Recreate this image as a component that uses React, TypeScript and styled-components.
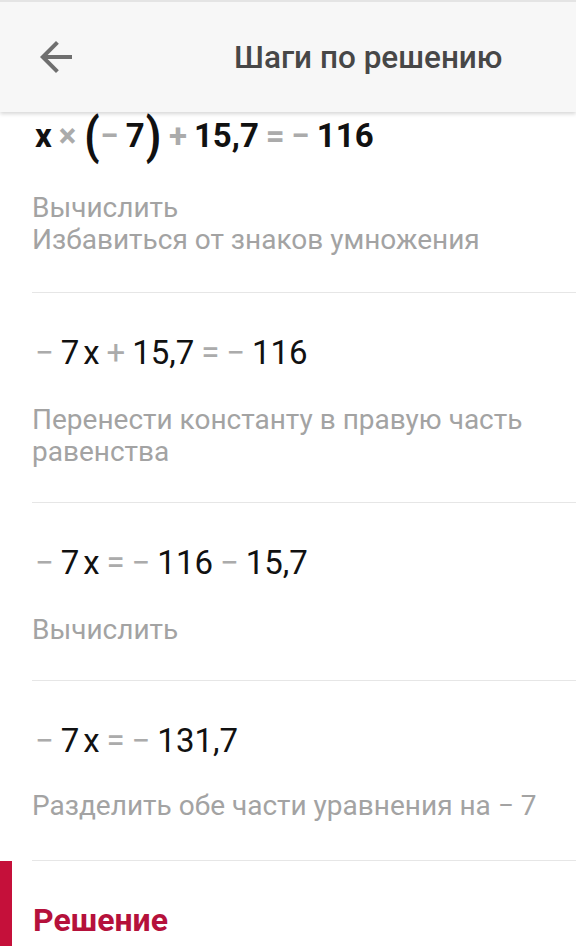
import styled, { createGlobalStyle } from 'styled-components';

const GlobalStyle = createGlobalStyle`
  html, body {
    margin: 0;
    padding: 0;
    background: #ffffff;
  }
  body {
    font-family: Roboto, "Noto Sans", "Liberation Sans", sans-serif;
    -webkit-font-smoothing: antialiased;
  }
`;

const Screen = styled.div`
  width: 576px;
  height: 946px;
  overflow: hidden;
  background: #ffffff;
`;

const Toolbar = styled.header`
  position: relative;
  z-index: 2;
  height: 110px;
  display: flex;
  align-items: center;
  background: #f7f7f7;
  border-top: 2px solid #e4e4e4;
  box-shadow: 0 2px 4px rgba(0, 0, 0, 0.16);
`;

const BackButton = styled.button`
  width: 48px;
  height: 48px;
  margin-left: 32px;
  padding: 0;
  border: none;
  background: transparent;
  display: flex;
  align-items: center;
  justify-content: center;
  color: #6f6f6f;
`;

const Title = styled.h1`
  margin: 0 0 0 154px;
  font-size: 31.5px;
  font-weight: 500;
  color: #474747;
`;

const StepList = styled.div`
  padding-left: 32px;
`;

const Step = styled.section<{ $first?: boolean; $last?: boolean }>`
  padding: ${({ $first }) => ($first ? '0' : '40px')} 0 ${({ $first, $last }) => ($first ? 36 : $last ? 38 : 34)}px;
  border-bottom: 1px solid #e6e6e6;
`;

const Equation = styled.div<{ $bold?: boolean }>`
  height: ${({ $bold }) => ($bold ? '48px' : '40px')};
  font-size: 33px;
  line-height: ${({ $bold }) => ($bold ? '48px' : '40px')};
  font-weight: ${({ $bold }) => ($bold ? 700 : 400)};
  word-spacing: -1.3px;
  color: #111111;
  white-space: pre;
  margin-left: 3px;
`;

const Op = styled.span`
  color: #ababab;
`;

const Paren = styled.span`
  display: inline-block;
  font-size: 44px;
  font-weight: 700;
  line-height: 48px;
  vertical-align: top;
  transform: scaleY(1.12);
  color: #111111;
  margin: 0 1px;
`;

const Var = styled.span`
  margin-left: 4px;
`;

const Description = styled.p<{ $gap?: number }>`
  margin: ${({ $gap }) => $gap ?? 31}px 0 0;
  font-size: 28px;
  line-height: 32px;
  color: #a3a3a3;
`;

const SolutionBlock = styled.section`
  border-left: 12px solid #c5103a;
  padding: 40px 0 0 21px;
  height: 100px;
`;

const SolutionTitle = styled.h2`
  margin: 0;
  font-size: 32px;
  font-weight: 700;
  color: #b5113b;
`;

const ArrowBack = () => (
  <svg width="48" height="48" viewBox="0 0 24 24" fill="currentColor">
    <path d="M20 11H7.83l5.59-5.59L12 4l-8 8 8 8 1.41-1.41L7.83 13H20v-2z" />
  </svg>
);

const App = () => {
  return (
    <Screen>
      <GlobalStyle />
      <Toolbar>
        <BackButton aria-label="Назад">
          <ArrowBack />
        </BackButton>
        <Title>Шаги по решению</Title>
      </Toolbar>

      <StepList>
        <Step $first>
          <Equation $bold>
            x <Op>×</Op> <Paren>(</Paren><Op>−</Op> 7<Paren>)</Paren> <Op>+</Op> 15,7 <Op>=</Op> <Op>−</Op> 116
          </Equation>
          <Description $gap={32}>
            Вычислить
            <br />
            Избавиться от знаков умножения
          </Description>
        </Step>

        <Step>
          <Equation>
            <Op>−</Op> 7<Var>x</Var> <Op>+</Op> 15,7 <Op>=</Op> <Op>−</Op> 116
          </Equation>
          <Description>Перенести константу в правую часть равенства</Description>
        </Step>

        <Step>
          <Equation>
            <Op>−</Op> 7<Var>x</Var> <Op>=</Op> <Op>−</Op> 116 <Op>−</Op> 15,7
          </Equation>
          <Description>Вычислить</Description>
        </Step>

        <Step $last>
          <Equation>
            <Op>−</Op> 7<Var>x</Var> <Op>=</Op> <Op>−</Op> 131,7
          </Equation>
          <Description $gap={29}>Разделить обе части уравнения на −{'\u00a0'}7</Description>
        </Step>
      </StepList>

      <SolutionBlock>
        <SolutionTitle>Решение</SolutionTitle>
      </SolutionBlock>
    </Screen>
  );
};

export default App;
